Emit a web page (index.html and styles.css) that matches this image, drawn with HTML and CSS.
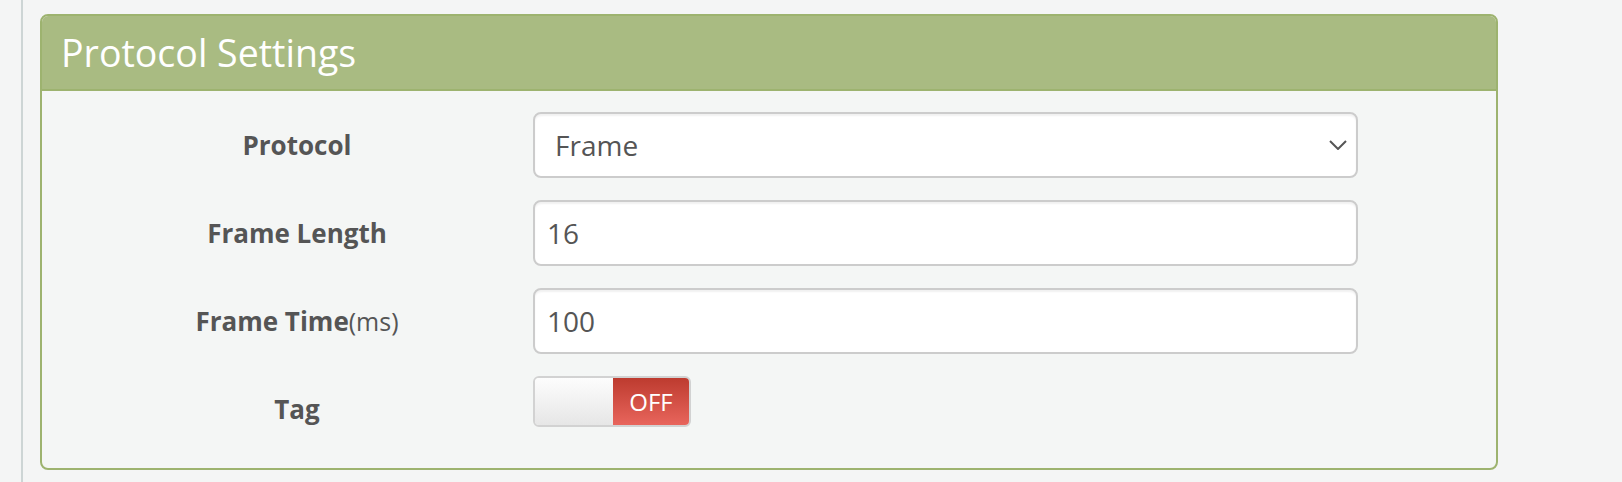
FILE: index.html
```html
<!DOCTYPE html>
<html lang="en">
<head>
  <meta charset="UTF-8" />
  <meta name="viewport" content="width=device-width, initial-scale=1" />
  <title>Protocol Settings</title>
  <link rel="stylesheet" href="styles.css">
</head>
<body>
  <div class="content">
    <section class="panel">
      <header class="panel-heading">
        <h2>Protocol Settings</h2>
      </header>

      <form class="panel-body">
        <div class="form-row">
          <label class="control-label">Protocol</label>
          <div class="select-box">
            <span>Frame</span>
            <svg class="caret" width="18" height="10" viewBox="0 0 18 10">
              <path d="M1 1 L9 9 L17 1" fill="none" stroke="#555" stroke-width="2" />
            </svg>
          </div>
        </div>

        <div class="form-row">
          <label class="control-label">Frame Length</label>
          <input class="form-control" type="text" value="16" />
        </div>

        <div class="form-row">
          <label class="control-label">Frame Time<span class="unit">(ms)</span></label>
          <input class="form-control" type="text" value="100" />
        </div>

        <div class="form-row">
          <label class="control-label">Tag</label>
          <div class="switch">
            <span class="switch-handle"></span>
            <span class="switch-off">OFF</span>
          </div>
        </div>
      </form>
    </section>
  </div>
</body>
</html>
```

FILE: styles.css
```css
body {
  margin: 0;
  background: #f4f5f5;
  font-family: 'Open Sans', 'Noto Sans', sans-serif;
  color: #555;
}
.content {
  margin-left: 21px;
  border-left: 2px solid #cdd5d5;
  padding: 14px 0 0 17px;
  min-height: 482px;
  box-sizing: border-box;
}
.panel {
  width: 1458px;
  box-sizing: border-box;
  border: 2px solid #9db36f;
  border-radius: 8px;
  background: #f4f6f5;
  overflow: hidden;
}
.panel-heading {
  background: #a9bb82;
  border-bottom: 2px solid #9db36f;
  height: 75px;
  box-sizing: border-box;
  padding: 16px 19px 0;
}
.panel-heading h2 {
  margin: 0;
  font-size: 37.5px;
  font-weight: 400;
  line-height: 42px;
  color: #fff;
}
.panel-body {
  margin: 0;
  padding: 21px 19px 4px;
}
.form-row {
  display: grid;
  grid-template-columns: 472px 825px;
  align-items: start;
  margin-bottom: 22px;
}
.control-label {
  height: 66px;
  display: flex;
  align-items: center;
  justify-content: center;
  font-size: 26px;
  font-weight: 700;
  color: #555;
}
.control-label .unit {
  font-weight: 400;
  font-size: 25px;
}
.form-control,
.select-box {
  height: 66px;
  box-sizing: border-box;
  border: 2px solid #ccc;
  border-radius: 8px;
  background: #fff;
  box-shadow: inset 0 2px 2px rgb(0 0 0 / 0.06);
  font-family: inherit;
  font-size: 28px;
  color: #555;
  padding: 0 12px;
  width: 100%;
  outline: none;
}
.select-box {
  display: flex;
  align-items: center;
  justify-content: space-between;
  padding: 0 9px 0 20px;
}
.caret {
  display: block;
}
.switch {
  width: 158px;
  height: 51px;
  box-sizing: border-box;
  border: 2px solid #d2d2d2;
  border-radius: 6px;
  display: flex;
  overflow: hidden;
}
.switch-handle {
  width: 78px;
  background: linear-gradient(#fdfdfd, #e6e6e6);
}
.switch-off {
  flex: 1;
  display: flex;
  align-items: center;
  justify-content: center;
  background: linear-gradient(#bd3b2f, #e8655c);
  color: #fff;
  font-size: 24px;
}
```
